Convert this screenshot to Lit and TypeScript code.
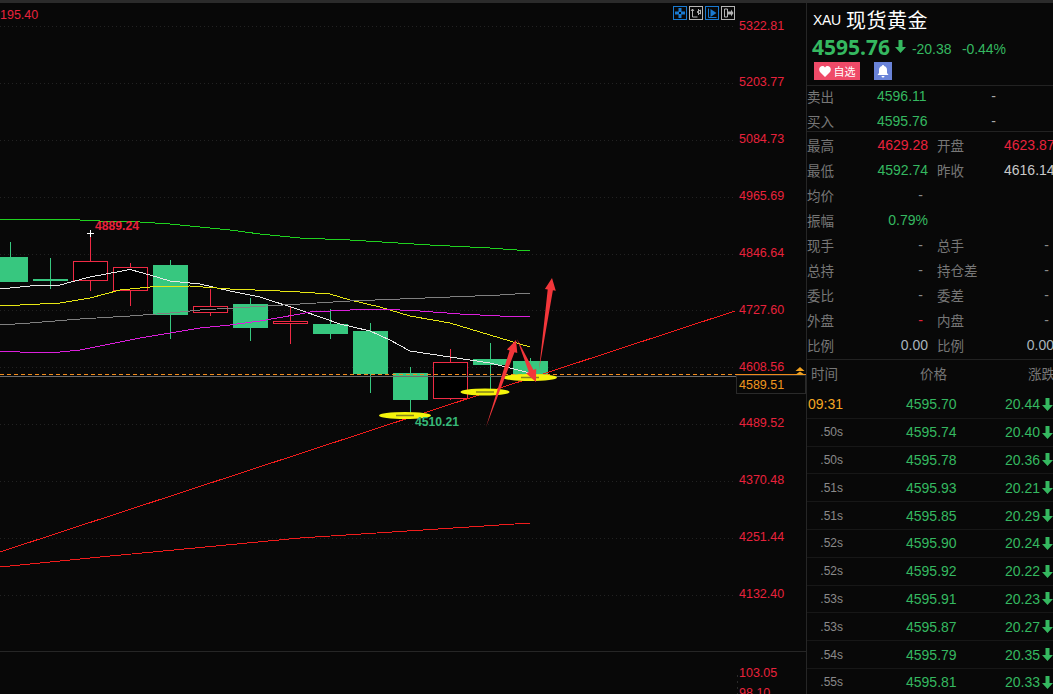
import { LitElement, html, css, svg } from "lit";
import { customElement } from "lit/decorators.js";

type C = [number, number, number, number, number];
const greens: C[] = [
  [-8, 257, 28, 282, 10.5], [33, 279, 68, 281, 50.5], [153, 265, 188, 315, 170.5], [233, 304, 268, 328, 250.5],
  [313, 324, 348, 334, 330.5], [353, 331, 388, 374, 370.5], [393, 373, 428, 400, 410.5], [473, 359, 508, 365, 490.5], [513, 361, 548, 376, 530.5],
];
const gw: [number, number, number][] = [
  [10.5, 242, 257], [50.5, 258, 289], [170.5, 260, 339], [250.5, 298, 341], [330.5, 309, 339], [370.5, 323, 393], [410.5, 367, 414], [490.5, 343, 392], [530.5, 358, 361],
];
const reds: C[] = [
  [73.5, 261.5, 107.5, 280.5, 90.5], [113.5, 267.5, 147.5, 290.5, 130.5], [193.5, 306.5, 227.5, 312.5, 210.5], [273.5, 321.5, 307.5, 323.5, 290.5], [433.5, 362.5, 467.5, 398.5, 450.5],
];
const rw: [number, number, number][] = [
  [90.5, 232, 291], [130.5, 263, 306], [210.5, 289, 316], [290.5, 306, 344], [450.5, 349, 400],
];
const lines: [string, string][] = [
  ["#1fd11f", "0,219 70,219.5 110,221.5 140,222 170,224 190,226 230,230 260,234 300,238 350,240 430,245 490,248 530,251"],
  ["#e8e8e8", "0,289 30,286 60,285 90,277 130,269.5 150,275 170,281 200,284 230,291 260,297 300,310 340,324 370,331 390,340 410,351 450,357 490,363 510,368 530,373"],
  ["#e6e614", "0,306 20,305 60,303 90,298 120,290 150,287 190,286 230,289 280,291 300,292 330,294 350,300 380,307 410,316 450,323 490,335 530,347"],
  ["#808080", "0,325 30,323 80,319 130,316 170,313 200,310 250,307 300,304 350,301 400,299 450,297 500,295 530,293"],
  ["#dc1fdc", "0,351 30,352.5 50,353 80,350 110,344 140,338 170,333 200,328 230,325 260,321 300,314 310,312 350,310 380,309 420,311 460,314 500,316 530,317"],
  ["#f01c1c", "0,567 100,557 300,538 530,523"],
  ["#f01c1c", "0,552 735,311"],
];
const axis: [string, number][] = [
  ["5322.81", 30], ["5203.77", 86], ["5084.73", 143], ["4965.69", 200], ["4846.64", 257], ["4727.60", 314],
  ["4608.56", 371], ["4489.52", 427], ["4370.48", 484], ["4251.44", 541], ["4132.40", 598], ["103.05", 677], ["98.10", 697],
];
const grid = [26, 83, 140, 197, 254, 310, 367, 424, 481, 538, 595];
const ell: [number, number, number][] = [[405, 415.5, 26], [485, 392, 24.5], [530, 377.5, 27]];
const arrow = (x1: number, y1: number, x2: number, y2: number) => {
  const d = Math.hypot(x2 - x1, y2 - y1), ux = (x2 - x1) / d, uy = (y2 - y1) / d, px = -uy, py = ux;
  const bx = x2 - ux * 12, by = y2 - uy * 12;
  const p = (x: number, y: number) => `${x.toFixed(1)},${y.toFixed(1)}`;
  return `${p(x1, y1)} ${p(bx + px * 2.6, by + py * 2.6)} ${p(bx + px * 5.5, by + py * 5.5)} ${p(x2, y2)} ${p(bx - px * 5.5, by - py * 5.5)} ${p(bx - px * 2.6, by - py * 2.6)}`;
};

const info: [string, string, string, string, string, string][] = [
  ["最高", "4629.28", "r", "开盘", "4623.87", "r"],
  ["最低", "4592.74", "g", "昨收", "4616.14", "w"],
  ["均价", "-", "d", "", "", ""],
  ["振幅", "0.79%", "g", "", "", ""],
  ["现手", "-", "d", "总手", "-", "d"],
  ["总持", "-", "d", "持仓差", "-", "d"],
  ["委比", "-", "d", "委差", "-", "d"],
  ["外盘", "-", "r", "内盘", "-", "d"],
  ["比例", "0.00", "b", "比例", "0.00", "b"],
];
const trades: [string, string, string][] = [
  ["09:31", "4595.70", "20.44"], [".50s", "4595.74", "20.40"], [".50s", "4595.78", "20.36"], [".51s", "4595.93", "20.21"],
  [".51s", "4595.85", "20.29"], [".52s", "4595.90", "20.24"], [".52s", "4595.92", "20.22"], [".53s", "4595.91", "20.23"],
  [".53s", "4595.87", "20.27"], [".54s", "4595.79", "20.35"], [".55s", "4595.81", "20.33"],
];
const downArrow = (w = 11, h = 13, c = "#35b860") => html`<svg width=${w} height=${h} viewBox="0 0 11 13"><path d="M3.500 0h4v7H11L5.500 13 0 7h3.500z" fill=${c}/></svg>`;

@customElement("app-root")
export class AppRoot extends LitElement {
  static styles = css`
    :host { display: block; width: 1053px; height: 694px; overflow: hidden; background: #080808; font-family: "Liberation Sans", "Noto Sans CJK SC", sans-serif; color: #888; }
    .top { height: 3px; background: #2b2b2b; }
    .main { display: flex; height: 691px; }
    .chart { position: relative; width: 806px; height: 691px; flex: none; border-right: 1px solid #262626; }
    .chart > svg { display: block; margin-top: -3px; }
    .axis { font-size: 12.5px; fill: #e8223c; font-family: "Liberation Sans", sans-serif; }
    .tools { position: absolute; left: 673px; top: 3px; display: flex; gap: 2px; }
    .tools svg { display: block; }
    .side { width: 246px; flex: none; overflow: hidden; }
    .title { display: flex; align-items: center; height: 31px; padding: 2px 0 0 6px; color: #fff; box-sizing: border-box; }
    .title .code { font-size: 14px; width: 33px; letter-spacing: -0.3px; }
    .title .name { font-family: "Noto Sans CJK SC", sans-serif; font-size: 20px; letter-spacing: 0.5px; }
    .quote { display: flex; align-items: center; height: 28px; padding: 0 0 3px 5px; box-sizing: border-box; color: #35b860; font-size: 14px; }
    .quote b { font-family: "Noto Sans", sans-serif; font-size: 21px; font-weight: 700; width: 83px; }
    .quote svg { margin-right: 6px; }
    .quote span { margin-right: 10.500px; padding-top: 4px; letter-spacing: -0.05px; }
    .btns { display: flex; height: 18px; padding-left: 7px; gap: 14px; }
    .fav { width: 46px; height: 18px; background: #ef4a68; color: #fff; font-size: 11px; display: flex; align-items: center; justify-content: center; gap: 3px; }
    .bell { width: 18px; height: 18px; background: #6a83d8; display: flex; align-items: center; justify-content: center; }
    .sell { margin-top: 5px; border-top: 1px solid #222; border-bottom: 1px solid #222; height: 47px; display: flex; flex-direction: column; gap: 6px; box-sizing: border-box; }
    .srow { display: grid; grid-template-columns: 70px 60px 59px; font-size: 14px; height: 19px; align-items: center; }
    .srow .dash { text-align: right; color: #aaa; }
    .lbl { color: #777; font-size: 13.5px; }
    .g { color: #35b860; } .r { color: #e8223c; } .w { color: #c8c8c8; } .d { color: #8a8a8a; } .b { color: #a8b4bc; }
    .dashv { padding-right: 5px; }
    .info { border-bottom: 1px solid #222; height: 228px; box-sizing: border-box; }
    .irow { display: grid; grid-template-columns: 70px 51px 9px 67px 50px; height: 25px; align-items: center; font-size: 14px; white-space: nowrap; }
    .irow .v { text-align: right; }
    .irow .v2 { grid-column: 5; text-align: right; }
    .thead { display: grid; grid-template-columns: 109px 108px 40px; height: 31px; padding: 0 0 5px 4px; box-sizing: border-box; align-items: center; color: #777; font-size: 13.5px; }
    .tr { display: grid; grid-template-columns: 36px 63px 51px 48px 35px 13px; height: 27.800px; align-items: center; font-size: 14px; border-bottom: 1px solid #171717; box-sizing: border-box; white-space: nowrap; }
    .tr .t { text-align: right; color: #8a8a8a; font-size: 12px; }
    .tr .t.first { color: #f5a623; font-size: 14px; }
    .tr .p { grid-column: 3; color: #35b860; }
    .tr .c { grid-column: 4 / span 2; color: #35b860; text-align: right; }
    .tr svg { justify-self: end; }
  `;

  chart() {
    return html`<svg width="806" height="694" viewBox="0 0 806 694">
      <rect x="0" y="651" width="806" height="1" fill="#262626"/>
      ${grid.map((y) => svg`<line x1="0" x2="735" y1=${y + 0.5} y2=${y + 0.5} stroke="#222" stroke-dasharray="1 3"/>`)}
      <line x1="737.500" x2="737.500" y1="675" y2="694" stroke="#2a2a2a" stroke-dasharray="2 4"/>
      ${gw.map(([x, a, b]) => svg`<line x1=${x} x2=${x} y1=${a} y2=${b} stroke="#37c77f"/>`)}
      ${greens.map(([a, b, c, d]) => svg`<rect x=${a} y=${b} width=${c - a} height=${d - b} fill="#37c77f"/>`)}
      ${rw.map(([x, a, b]) => svg`<line x1=${x} x2=${x} y1=${a} y2=${b} stroke="#ee2a44"/>`)}
      ${reds.map(([a, b, c, d]) => svg`<rect x=${a} y=${b} width=${c - a} height=${d - b} fill="#000" stroke="#ee2a44"/>`)}
      <path d="M87 233.500h7M90.500 230v7" stroke="#fff" fill="none"/>
      ${lines.map(([c, p]) => svg`<polyline points=${p} fill="none" stroke=${c} stroke-width="1" shape-rendering="crispEdges"/>`)}
      <line x1="0" x2="806" y1="376.500" y2="376.500" stroke="#6e6e6e"/>
      <line x1="0" x2="736" y1="374.500" y2="374.500" stroke="#f08a1c" stroke-dasharray="4 3"/>
      <line x1="736" x2="806" y1="374.500" y2="374.500" stroke="#f08a1c"/>
      ${ell.map(([x, y, r]) => svg`<ellipse cx=${x} cy=${y} rx=${r} ry="3.600" fill="#f4f40c"/><line x1=${x - 9} x2=${x + 9} y1=${y} y2=${y} stroke="#85851c" stroke-width="1.500"/>`)}
      <polygon points=${arrow(486, 427, 516, 340)} fill="#f2363a"/>
      <polygon points=${arrow(517, 339, 536, 382)} fill="#f2363a"/>
      <polygon points=${arrow(539, 370, 552, 278)} fill="#f2363a"/>
      <rect x="736.500" y="375.500" width="69" height="18" fill="#080808" stroke="#2a2a2a"/>
      <path d="M800 367l4.500 4h-9zM800 371.500l5 3.500h-10z" fill="#f0a020"/>
      ${axis.map(([t, y]) => svg`<text class="axis" x="739" y=${y}>${t}</text>`)}
      <text class="axis" x="739" y="389" style="fill:#f0961e">4589.51</text>
      <text class="axis" x="0" y="19">195.40</text>
      <text class="axis" x="95" y="230" style="font-weight:700;font-size:12.2px">4889.24</text>
      <text class="axis" x="415" y="426" style="fill:#37b878;font-weight:700;font-size:12.2px">4510.21</text>
    </svg>`;
  }

  tools() {
    const blue = "#1a7ad0", gray = "#b4b4b4";
    return html`<div class="tools">
      <svg width="14" height="14"><rect x=".5" y=".5" width="13" height="13" fill="none" stroke=${blue}/><path d="M5.500 2h3v3.500H12v3H8.500V12h-3V8.500H2v-3h3.500z" fill=${blue}/><path d="M6 6h2v2H6z" fill="#080808"/></svg>
      <svg width="14" height="14"><rect x=".5" y=".5" width="13" height="13" fill="none" stroke=${gray}/><path d="M3.500 3v8h5M3.500 3l-1.500 2M3.500 3l1.500 2M9.500 3v6M11.500 4v4L8 6z" stroke=${gray} fill="none"/></svg>
      <svg width="14" height="14"><rect x=".5" y=".5" width="13" height="13" fill="none" stroke=${blue}/><path d="M3.500 2.500v9h8" stroke=${blue} fill="none"/><path d="M5.500 3 11.500 7l-6 4z" fill=${blue}/></svg>
      <svg width="14" height="14"><rect x=".5" y=".5" width="13" height="13" fill="none" stroke=${gray}/><path d="M3.500 3h3v8h-3z" stroke=${gray} fill="none"/><path d="M7 5.500h3V3.500l2.500 3.500L10 10.500v-2H7z" fill=${gray}/></svg>
    </div>`;
  }

  side() {
    return html`<div class="side">
      <div class="title"><span class="code">XAU</span><span class="name">现货黄金</span></div>
      <div class="quote"><b>4595.76</b>${downArrow()}<span>-20.38</span><span>-0.44%</span></div>
      <div class="btns">
        <div class="fav"><svg width="12" height="11" viewBox="0 0 12 11"><path d="M6 11 1 6C-1 3 1 0 3.500 0 4.800 0 5.500.7 6 1.500 6.500.7 7.200 0 8.500 0 11 0 13 3 11 6z" fill="#fff"/></svg>自选</div>
        <div class="bell"><svg width="12" height="13" viewBox="0 0 12 13"><path d="M6 0c.8 0 1 .5 1 1 2 .5 3 2 3 4v3l1.500 2H.5L2 8V5c0-2 1-3.500 3-4 0-.5.2-1 1-1zM4.500 11h3a1.500 1.500 0 0 1-3 0z" fill="#fff"/></svg></div>
      </div>
      <div class="sell">
        <div class="srow"><span class="lbl">卖出</span><span class="g">4596.11</span><span class="dash">-</span></div>
        <div class="srow"><span class="lbl">买入</span><span class="g">4595.76</span><span class="dash">-</span></div>
      </div>
      <div class="info">
        ${info.map(([a, b, bc, c, d, dc]) => html`<div class="irow">
          <span class="lbl">${a}</span><span class="v ${bc} ${b === "-" ? "dashv" : ""}">${b}</span><span></span><span class="lbl">${c}</span><span class="v2 ${dc} ${d === "-" ? "dashv" : ""}">${d}</span>
        </div>`)}
      </div>
      <div class="thead"><span>时间</span><span>价格</span><span>涨跌</span></div>
      ${trades.map(([t, p, c], i) => html`<div class="tr">
        <span class="t ${i === 0 ? "first" : ""}">${t}</span><span class="p">${p}</span><span class="c">${c}</span>${downArrow(11, 13)}
      </div>`)}
    </div>`;
  }

  render() {
    return html`<div class="top"></div><div class="main">
      <div class="chart">${this.chart()}${this.tools()}</div>
      ${this.side()}
    </div>`;
  }
}
